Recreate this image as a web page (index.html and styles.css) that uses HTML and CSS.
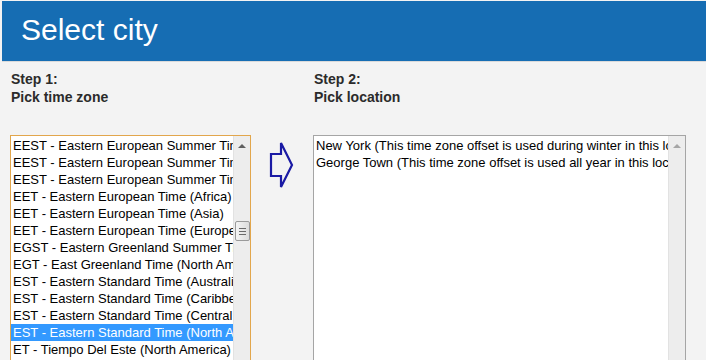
FILE: index.html
```html
<!DOCTYPE html>
<html lang="en">
<head>
  <meta charset="UTF-8">
  <title>Select city</title>
  <link rel="stylesheet" href="styles.css">
</head>
<body>
  <header class="titlebar">
    <h1>Select city</h1>
  </header>

  <main class="steps">
    <section class="step step-zone">
      <h2>Step 1:<br>Pick time zone</h2>
      <div class="listbox focused">
        <ul class="options">
          <li>EEST - Eastern European Summer Time (Africa)</li>
          <li>EEST - Eastern European Summer Time (Asia)</li>
          <li>EEST - Eastern European Summer Time (Europe)</li>
          <li>EET - Eastern European Time (Africa)</li>
          <li>EET - Eastern European Time (Asia)</li>
          <li>EET - Eastern European Time (Europe)</li>
          <li>EGST - Eastern Greenland Summer Time (North America)</li>
          <li>EGT - East Greenland Time (North America)</li>
          <li>EST - Eastern Standard Time (Australia)</li>
          <li>EST - Eastern Standard Time (Caribbean)</li>
          <li>EST - Eastern Standard Time (Central America)</li>
          <li class="selected">EST - Eastern Standard Time (North America)</li>
          <li>ET - Tiempo Del Este (North America)</li>
          <li>FET - Further-eastern European Time (Europe)</li>
        </ul>
        <div class="scrollbar">
          <span class="arrow-up"></span>
          <span class="thumb"><i></i><i></i><i></i></span>
        </div>
      </div>
    </section>

    <div class="next-arrow">
      <svg width="25" height="50" viewBox="0 0 25 50">
        <polygon points="2,13 12,13 12,2 23,24 12,46 12,35 2,35" fill="none" stroke="#1a1aa4" stroke-width="2.2" stroke-linejoin="miter"/>
      </svg>
    </div>

    <section class="step step-location">
      <h2>Step 2:<br>Pick location</h2>
      <div class="listbox">
        <ul class="options">
          <li>New York (This time zone offset is used during winter in this location)</li>
          <li>George Town (This time zone offset is used all year in this location)</li>
        </ul>
        <div class="scrollbar disabled">
          <span class="arrow-up"></span>
        </div>
      </div>
    </section>
  </main>
</body>
</html>
```

FILE: styles.css
```css
body {
  font-family: "Liberation Sans", Arial, sans-serif;
  background: #f3f3f3;
  margin: 0;
  overflow: hidden;
}

.titlebar {
  margin: 1px 0 0 2px;
  height: 60px;
  background: #166db3;
  border-bottom: 1px solid #dadada;
  padding-left: 19px;
}

.titlebar h1 {
  margin: 0;
  font-size: 30px;
  font-weight: normal;
  line-height: 57px;
  color: #fff;
}

.steps {
  display: flex;
  align-items: flex-start;
  padding: 8px 0 0 10px;
}

.step h2 {
  margin: 0 0 29px 1px;
  font-size: 14px;
  line-height: 18px;
  color: #2b2b2b;
}

.step-zone .listbox {
  width: 241px;
  border-color: #e2a64c;
}

.step-location .listbox {
  width: 373px;
}

.next-arrow {
  margin: 71px 19px 0 18px;
  width: 25px;
}

.next-arrow svg {
  display: block;
}

.listbox {
  box-sizing: border-box;
  height: 240px;
  display: flex;
  background: #fff;
  border: 1px solid #a5a5a5;
}

.options {
  flex: 1;
  min-width: 0;
  list-style: none;
  margin: 0;
  padding: 1px 0 0 0;
  overflow: hidden;
  font-size: 13px;
  color: #000;
}

.options li {
  height: 17px;
  line-height: 17px;
  padding: 0 2px;
  white-space: nowrap;
  overflow: hidden;
}

.options li.selected {
  background: #3399ff;
  color: #fff;
}

.scrollbar {
  width: 16px;
  display: flex;
  flex-direction: column;
  align-items: center;
  background: #ededed;
  border-left: 1px solid #e2e2e2;
}

.arrow-up {
  margin-top: 8px;
  width: 0;
  height: 0;
  border-left: 4px solid transparent;
  border-right: 4px solid transparent;
  border-bottom: 4px solid #606060;
}

.scrollbar.disabled .arrow-up {
  border-bottom-color: #a6a6a6;
}

.thumb {
  box-sizing: border-box;
  margin-top: 73px;
  width: 15px;
  height: 20px;
  border: 1px solid #9a9a9a;
  border-radius: 2px;
  background: linear-gradient(to right, #f4f4f4, #dcdcdc);
  display: flex;
  flex-direction: column;
  align-items: center;
  justify-content: center;
  gap: 2px;
}

.thumb i {
  display: block;
  width: 7px;
  height: 1px;
  background: #6a6a6a;
}
```
